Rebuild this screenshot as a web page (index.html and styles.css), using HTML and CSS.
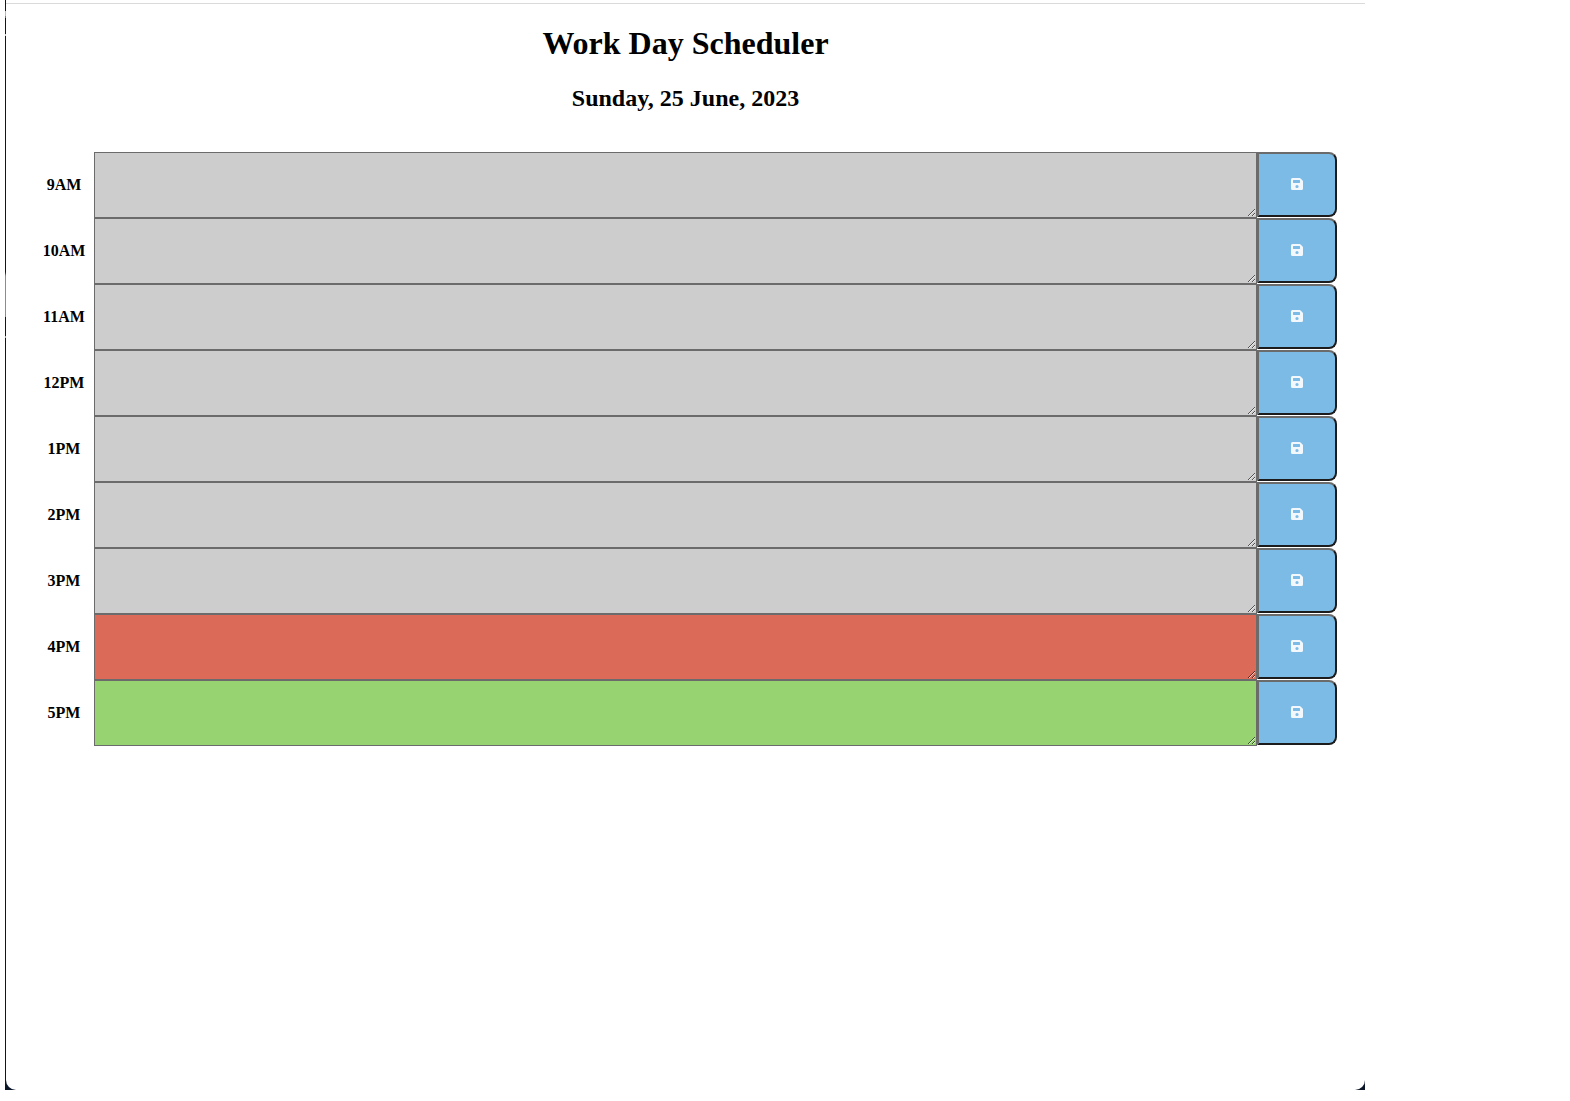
FILE: index.html
```html
<!DOCTYPE html>
<html lang="en">
<head>
  <meta charset="utf-8">
  <title>Work Day Scheduler</title>
  <link rel="stylesheet" href="styles.css">
</head>
<body>
  <svg class="sprite" aria-hidden="true">
    <symbol id="save" viewBox="0 0 12 12">
      <path fill-rule="evenodd" d="M1.500 0H8.600Q9.200 0 9.600 .4L11.600 2.400Q12 2.800 12 3.400V10.500Q12 12 10.500 12H1.500Q0 12 0 10.500V1.500Q0 0 1.500 0ZM2.400 2Q2 2 2 2.400V4.600Q2 5 2.400 5H8.600Q9 5 9 4.600V2.400Q9 2 8.600 2ZM6 6.900A1.600 1.600 0 1 0 6 10.100A1.600 1.600 0 1 0 6 6.900Z"/>
    </symbol>
  </svg>
  <div class="desktop">
    <div class="window">
      <header class="header">
        <h1 class="title">Work Day Scheduler</h1>
        <h2 class="date">Sunday, 25 June, 2023</h2>
      </header>
      <main class="schedule">
        <div class="row">
          <label class="hour" for="h9">9AM</label>
          <textarea class="entry past" id="h9"></textarea>
          <button class="save" aria-label="Save 9AM"><svg class="icon"><use href="#save"/></svg></button>
        </div>
        <div class="row">
          <label class="hour" for="h10">10AM</label>
          <textarea class="entry past" id="h10"></textarea>
          <button class="save" aria-label="Save 10AM"><svg class="icon"><use href="#save"/></svg></button>
        </div>
        <div class="row">
          <label class="hour" for="h11">11AM</label>
          <textarea class="entry past" id="h11"></textarea>
          <button class="save" aria-label="Save 11AM"><svg class="icon"><use href="#save"/></svg></button>
        </div>
        <div class="row">
          <label class="hour" for="h12">12PM</label>
          <textarea class="entry past" id="h12"></textarea>
          <button class="save" aria-label="Save 12PM"><svg class="icon"><use href="#save"/></svg></button>
        </div>
        <div class="row">
          <label class="hour" for="h13">1PM</label>
          <textarea class="entry past" id="h13"></textarea>
          <button class="save" aria-label="Save 1PM"><svg class="icon"><use href="#save"/></svg></button>
        </div>
        <div class="row">
          <label class="hour" for="h14">2PM</label>
          <textarea class="entry past" id="h14"></textarea>
          <button class="save" aria-label="Save 2PM"><svg class="icon"><use href="#save"/></svg></button>
        </div>
        <div class="row">
          <label class="hour" for="h15">3PM</label>
          <textarea class="entry past" id="h15"></textarea>
          <button class="save" aria-label="Save 3PM"><svg class="icon"><use href="#save"/></svg></button>
        </div>
        <div class="row">
          <label class="hour" for="h16">4PM</label>
          <textarea class="entry present" id="h16"></textarea>
          <button class="save" aria-label="Save 4PM"><svg class="icon"><use href="#save"/></svg></button>
        </div>
        <div class="row">
          <label class="hour" for="h17">5PM</label>
          <textarea class="entry future" id="h17"></textarea>
          <button class="save" aria-label="Save 5PM"><svg class="icon"><use href="#save"/></svg></button>
        </div>
      </main>
    </div>
  </div>
</body>
</html>
```
FILE: styles.css
```css
* {
  box-sizing: border-box;
}

body {
  margin: 0;
  background: #fff;
  color: #000;
  font-family: "Liberation Serif", "Times New Roman", serif;
}

.sprite {
  display: none;
}

/* Backdrop showing along the window's left edge and behind its lower corners */
.desktop {
  display: flex;
  min-height: calc(100vh - 11px);
  margin: 0 205px 11px 5px;
  padding-left: 1px;
  background: linear-gradient(#0b1628 11px, #b9b9b9 11px 16px, #777 16px 18px, #0b1628 18px 34px, #ccc 34px 36px, #0b1628 36px 272px, #6f93b3 276px 317px, #0b1628 317px 336px, #aaa 336px 338px, #0b1628 338px);
}

.window {
  flex: 1;
  padding: 3px 0 0;
  background: #fff;
  border-radius: 0 0 10px 10px;
}

.header {
  padding: 20px 0 40px;
  border-top: 1px solid #dadada;
  text-align: center;
}

.title {
  margin: 0 0 22px;
  font-size: 32px;
  line-height: 38px;
}

.date {
  margin: 0;
  font-size: 24px;
  line-height: 28px;
}

.schedule {
  padding: 0 28px;
}

.row {
  display: flex;
  height: 66px;
}

.hour {
  display: flex;
  flex: 0 0 60px;
  align-items: center;
  justify-content: center;
  font-size: 16px;
  font-weight: bold;
}

.entry {
  flex: 1;
  min-width: 0;
  border: 1px solid #6b6b6b;
  border-radius: 0;
  resize: both;
}

.past {
  background: #cdcdcd;
}

.present {
  background: #dc6a59;
}

.future {
  background: #97d370;
}

.save {
  display: flex;
  flex: 0 0 80px;
  align-items: center;
  justify-content: center;
  height: 65px;
  padding: 0 0 1px;
  border: 2px solid;
  border-color: #6b6b6b #1c1c1c #1c1c1c #6b6b6b;
  border-radius: 0 8px 8px 0;
  background: #7bbbe6;
  color: #f3f8fd;
}

.icon {
  width: 12px;
  height: 12px;
  fill: currentColor;
}
```
